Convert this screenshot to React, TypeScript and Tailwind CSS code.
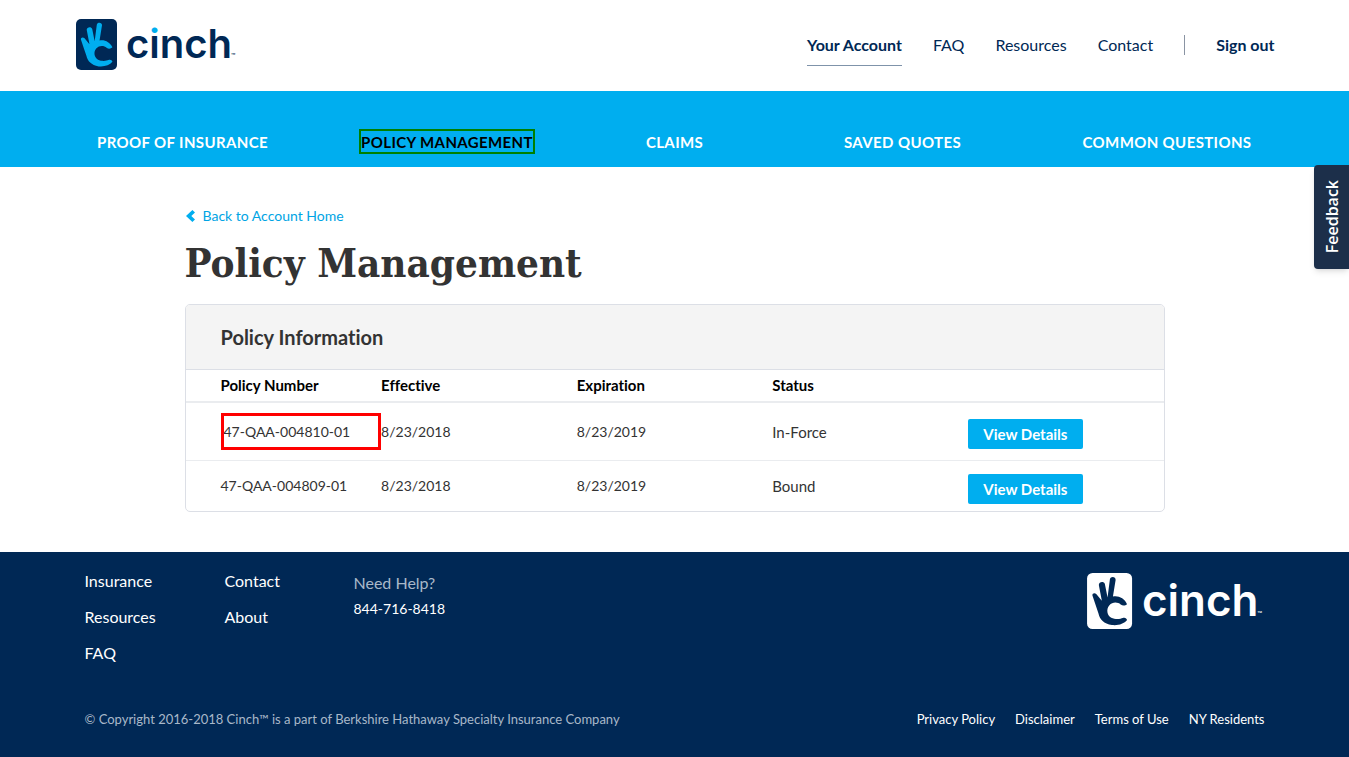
type LogoProps = {
  id: string;
  className: string;
  tile: string;
  hand: string;
  word: string;
  dot: string;
};

function Logo({ id, className, tile, hand, word, dot }: LogoProps) {
  return (
    <svg viewBox="0 0 162 51" className={className} role="img" aria-label="Cinch">
      <defs>
        <linearGradient id={id} gradientUnits="userSpaceOnUse" x1="0" y1="0" x2="0" y2="51">
          <stop offset="0.3" stopColor={dot} />
          <stop offset="0.3" stopColor={word} />
        </linearGradient>
      </defs>
      <rect width="41" height="51" rx="5" fill={tile} />
      <svg width="41" height="51" viewBox="0 0 134 169" preserveAspectRatio="none">
        <path
          fill={hand}
          d="M16 68 C15 61 23 59 28 64 L44 84 L35 36 C35 26 50 24 53 33 L61 74 L68 19 C70 9 86 11 85 21 L77 71 C92 67 112 76 119 94 C114 99 106 100 100 95 C92 88 76 86 66 98 C56 110 60 128 72 135 C84 141 100 139 106 136 C112 133 118 136 119 142 C110 154 92 159 74 157 C50 153 38 140 34 122 C28 104 22 86 16 68 Z"
        />
      </svg>
      <text x="50" y="39" fill={word} className="font-['Inter',sans-serif] text-[40px] font-semibold">
        c<tspan fill={`url(#${id})`}>i</tspan>nch
      </text>
      <text x="155" y="40" fill={word} className="font-['Inter',sans-serif] text-[7px] font-medium">
        ™
      </text>
    </svg>
  );
}

const sections = ["Proof of Insurance", "Policy Management", "Claims", "Saved Quotes", "Common Questions"];

const policies = [
  { number: "47-QAA-004810-01", effective: "8/23/2018", expiration: "8/23/2019", status: "In-Force", marked: true },
  { number: "47-QAA-004809-01", effective: "8/23/2018", expiration: "8/23/2019", status: "Bound", marked: false },
];

const legal = ["Privacy Policy", "Disclaimer", "Terms of Use", "NY Residents"];

export default function App() {
  return (
    <div className="relative bg-white font-['Lato',sans-serif] text-[#333333] [font-variant-ligatures:none]">
      <header className="mx-auto flex h-[91px] max-w-[1200px] items-center justify-between pb-0.5 pl-px">
        <a href="#home">
          <Logo
            id="logo-header"
            className="h-[51px] w-[162px]"
            tile="#002855"
            hand="#00aeef"
            word="#002855"
            dot="#00aeef"
          />
        </a>
        <nav aria-label="Main" className="flex items-center gap-[31px] text-base text-[#002855]">
          <a href="#account" className="-mb-px border-b border-[#7f93aa] pt-2 pb-2 font-bold">
            Your Account
          </a>
          <a href="#faq">FAQ</a>
          <a href="#resources">Resources</a>
          <a href="#contact">Contact</a>
          <span className="h-5 w-px bg-[#8a94a3]" />
          <a href="#signout" className="font-bold">
            Sign out
          </a>
        </nav>
      </header>

      <nav aria-label="Account" className="bg-[#00aeef]">
        <ul className="mx-auto grid h-[76px] max-w-[1200px] grid-cols-[216fr_313fr_142fr_314fr_215fr] items-end justify-items-center pb-[13px] text-[15px] leading-5 font-bold tracking-wide text-white uppercase">
          {sections.map((name) => (
            <li key={name}>
              <a
                href="#section"
                className={
                  name === "Policy Management"
                    ? "block border-2 border-[#008000] pt-px text-black"
                    : "block border-2 border-transparent pt-px"
                }
              >
                {name}
              </a>
            </li>
          ))}
        </ul>
      </nav>

      <button
        type="button"
        className="absolute top-[165px] right-0 flex h-[104px] w-[35px] items-center justify-center rounded-l bg-[#1c2f4a] font-['Open_Sans',sans-serif] text-base font-semibold text-white shadow-md"
      >
        <span className="rotate-180 [writing-mode:vertical-rl]">Feedback</span>
      </button>

      <main className="mx-auto max-w-[980px] pt-[39px] pb-10">
        <a href="#account" className="flex items-center gap-2 text-sm leading-5 text-[#00a4e4]">
          <svg viewBox="0 0 9 12" className="ml-px h-3 w-[9px]" fill="#00aeef" aria-hidden="true">
            <path d="M6.4 0 L9 2.5 L5.3 6 L9 9.5 L6.4 12 L0 6 Z" />
          </svg>
          Back to Account Home
        </a>
        <h1 className="mt-2 mb-3 font-['DejaVu_Serif_Condensed',serif] text-[40px] leading-[58px] font-bold">
          Policy Management
        </h1>

        <section className="overflow-hidden rounded-[5px] border border-[#dcdfe6]">
          <h2 className="border-b border-[#dcdfe6] bg-[#f4f4f4] px-[35px] py-[18px] text-[20px] leading-7 font-bold">
            Policy Information
          </h2>
          <table className="w-full table-fixed text-left text-[15px]">
            <thead className="border-b-2 border-[#eaecef] leading-[31px] text-black">
              <tr>
                <th className="pl-[35px]">Policy Number</th>
                <th>Effective</th>
                <th>Expiration</th>
                <th>Status</th>
                <th aria-label="Actions" />
              </tr>
            </thead>
            <tbody>
              {policies.map((p) => (
                <tr key={p.number} className={p.marked ? "h-[58px] border-b border-[#eaecef]" : "h-[51px]"}>
                  <td className="pl-[35px] text-sm">
                    <div className={p.marked ? "border-3 border-[#ff0000] pt-px leading-[30px]" : "pt-px"}>
                      {p.number}
                    </div>
                  </td>
                  <td className="pt-px text-sm">{p.effective}</td>
                  <td className="pt-px text-sm">{p.expiration}</td>
                  <td className="pt-px">{p.status}</td>
                  <td className="pt-1.5">
                    <button
                      type="button"
                      className="block h-[30px] w-[115px] rounded-[2px] bg-[#00aeef] font-bold text-white"
                    >
                      View Details
                    </button>
                  </td>
                </tr>
              ))}
            </tbody>
          </table>
        </section>
      </main>

      <footer className="bg-[#002855] text-white">
        <div className="mx-auto max-w-[1180px] pt-[11px] pb-7">
          <div className="flex items-start justify-between">
            <div className="flex text-base leading-9">
              <ul className="w-[140px]">
                <li><a href="#insurance">Insurance</a></li>
                <li><a href="#resources">Resources</a></li>
                <li><a href="#faq">FAQ</a></li>
              </ul>
              <ul className="w-[129px]">
                <li><a href="#contact">Contact</a></li>
                <li><a href="#about">About</a></li>
              </ul>
              <div className="pt-[7px] leading-[26px]">
                <p className="text-[#a9b8c9]">Need Help?</p>
                <a href="tel:8447168418" className="block text-sm leading-[26px]">
                  844-716-8418
                </a>
              </div>
            </div>
            <Logo
              id="logo-footer"
              className="mt-[10px] h-[56px] w-[178px]"
              tile="#ffffff"
              hand="#002855"
              word="#ffffff"
              dot="#ffffff"
            />
          </div>
          <div className="mt-[38px] flex justify-between text-[13px] leading-5">
            <p className="text-[#a9b8c9]">
              © Copyright 2016-2018 Cinch™ is a part of Berkshire Hathaway Specialty Insurance Company
            </p>
            <ul className="flex gap-5">
              {legal.map((name) => (
                <li key={name}>
                  <a href="#legal">{name}</a>
                </li>
              ))}
            </ul>
          </div>
        </div>
      </footer>
    </div>
  );
}
